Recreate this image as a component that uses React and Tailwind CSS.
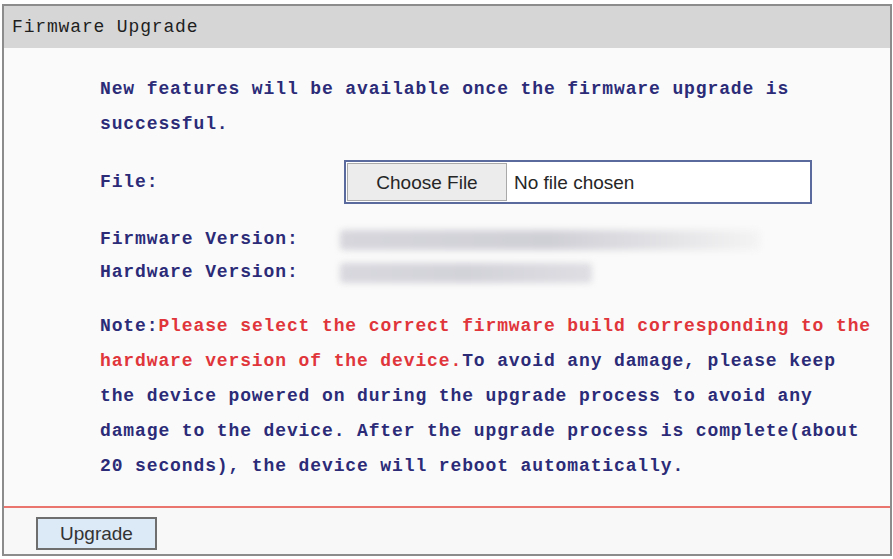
import React from 'react';

const mono = { fontFamily: '"Liberation Mono", "DejaVu Sans Mono", monospace' };

const Row = ({ label, children, className = '' }) => (
    <div className={`flex items-center ${className}`}>
        <div className="w-[244px] shrink-0">{label}</div>
        {children}
    </div>
);

export default function App() {
    return (
        <div className="w-[893px] h-[559px] bg-white pt-[4px] pl-[2px] pr-[1px]">
            <div className="h-[552px] border-2 border-[#8c8c8c] flex flex-col bg-[#fafafa]" style={mono}>
                {/* Header */}
                <div className="h-[42px] bg-[#d6d6d6] flex items-center pl-[8px] text-[18px] tracking-[0.85px] text-[#1e1e1e]">
                    Firmware Upgrade
                </div>

                {/* Body */}
                <div className="flex-1 pl-[96px] pt-[24px] text-[18px] font-bold tracking-[0.88px] text-[#2b2b78] leading-[35px]">
                    <p>
                        New features will be available once the firmware upgrade is
                        <br />
                        successful.
                    </p>

                    <Row label="File:" className="h-[44px] mt-[18px]">
                        <div className="w-[468px] h-[44px] border-2 border-[#5b6a9c] bg-white flex items-center p-[1px]" style={{ fontFamily: '"Liberation Sans", Arial, sans-serif' }}>
                            <div className="h-full w-[160px] bg-[#ececec] border border-[#a9a9a9] flex items-center justify-center text-[19px] font-normal tracking-normal text-[#262626]">
                                Choose File
                            </div>
                            <span className="ml-[7px] text-[19px] font-normal tracking-normal text-[#262626]">No file chosen</span>
                        </div>
                    </Row>

                    <Row label="Firmware Version:" className="h-[33px] mt-[19px]">
                        <div className="ml-[-4px] w-[420px] h-[20px] rounded-sm bg-gradient-to-r from-[#d6d6dc] via-[#cfcfd6] to-[#f4f4f4] blur-[3px]" />
                    </Row>
                    <Row label="Hardware Version:" className="h-[33px]">
                        <div className="ml-[-4px] w-[252px] h-[20px] rounded-sm bg-gradient-to-r from-[#d8d8de] via-[#d2d2d9] to-[#dedee3] blur-[3px]" />
                    </Row>

                    <p className="mt-[20px]">
                        Note:<span className="text-[#e0353a]">Please select the correct firmware build corresponding to the</span>
                        <br />
                        <span className="text-[#e0353a]">hardware version of the device.</span>To avoid any damage, please keep
                        <br />
                        the device powered on during the upgrade process to avoid any
                        <br />
                        damage to the device. After the upgrade process is complete(about
                        <br />
                        20 seconds), the device will reboot automatically.
                    </p>
                </div>

                {/* Footer */}
                <div className="border-t-2 border-[#e9756e] h-[48px] pt-[9px] pl-[32px] bg-[#f8f8f8]">
                    <button className="h-[33px] w-[121px] bg-[#dce9f6] border-2 border-[#6e6e6e] text-[19px] text-[#333333] leading-none" style={{ fontFamily: '"Liberation Sans", Arial, sans-serif' }}>
                        Upgrade
                    </button>
                </div>
            </div>
        </div>
    );
}
